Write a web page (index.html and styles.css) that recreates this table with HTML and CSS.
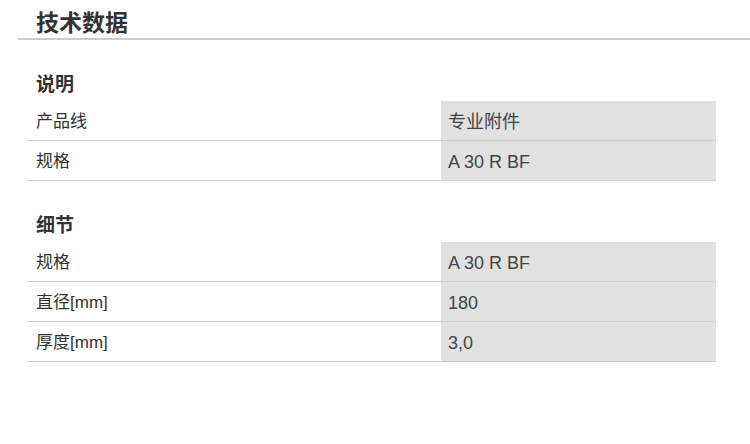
FILE: index.html
```html
<!DOCTYPE html>
<html lang="zh">
<head>
<meta charset="utf-8">
<title>技术数据</title>
<link rel="stylesheet" href="styles.css">
</head>
<body>
<div class="page">
  <h1 class="title">技术数据</h1>
  <section class="section">
    <h2 class="section-title">说明</h2>
    <div class="table">
      <div class="row"><div class="label">产品线</div><div class="value">专业附件</div></div>
      <div class="row"><div class="label">规格</div><div class="value">A 30 R BF</div></div>
    </div>
  </section>
  <section class="section">
    <h2 class="section-title">细节</h2>
    <div class="table">
      <div class="row"><div class="label">规格</div><div class="value">A 30 R BF</div></div>
      <div class="row"><div class="label">直径[mm]</div><div class="value">180</div></div>
      <div class="row"><div class="label">厚度[mm]</div><div class="value">3,0</div></div>
    </div>
  </section>
</div>
</body>
</html>
```

FILE: styles.css
```css
* { box-sizing: border-box; }
html, body { margin: 0; padding: 0; background: #fff; }
body {
  font-family: "Liberation Sans", "Noto Sans CJK SC", sans-serif;
  color: #333;
}
.page { width: 750px; }
.title {
  margin: 0 0 0 18px;
  padding: 10px 0 2px 18px;
  font-size: 23px;
  line-height: 26px;
  font-weight: bold;
  color: #333;
  border-bottom: 2px solid #cccccc;
}
.section { margin-top: 33px; }
.section-title {
  margin: 0 0 4px 36px;
  font-size: 19px;
  line-height: 24px;
  font-weight: bold;
  color: #333;
}
.table {
  margin-left: 27px;
  width: 689px;
  display: flex;
  flex-direction: column;
}
.row {
  display: grid;
  grid-template-columns: 414px 275px;
  height: 40px;
}
.label, .value {
  display: flex;
  align-items: center;
  line-height: 20px;
  padding-top: 3px;
  border-bottom: 1px solid #cfcfcf;
}
.label { padding-left: 9px; color: #333; font-size: 17px; }
.value { padding-left: 7px; background: #e1e1e1; color: #444; font-size: 18px; }
```
